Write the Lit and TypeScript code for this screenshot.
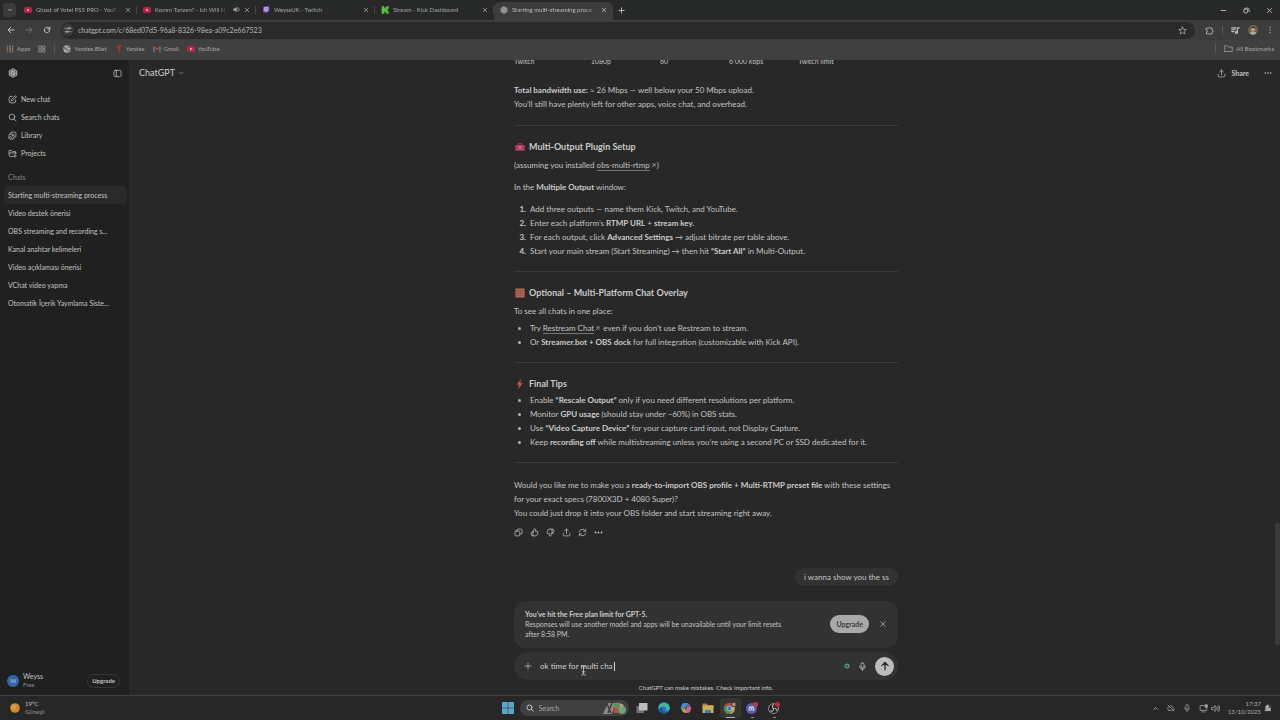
import { LitElement, html, css, svg, nothing } from "lit";
import { customElement } from "lit/decorators.js";
import { classMap } from "lit/directives/class-map.js";

const glyphs: Record<string, unknown> = {
  down: svg`<path d="M6 9l6 6 6-6"/>`,
  up: svg`<path d="M6 15l6-6 6 6"/>`,
  close: svg`<path d="M5 5l14 14M19 5L5 19"/>`,
  plus: svg`<path d="M12 3v18M3 12h18"/>`,
  back: svg`<path d="M21 12H4M11 4l-8 8 8 8"/>`,
  forward: svg`<path d="M3 12h17M13 4l8 8-8 8"/>`,
  reload: svg`<path d="M20 12a8 8 0 1 1-2.4-5.7L20 8.500M20.500 3v6h-6"/>`,
  tune: svg`<path d="M3 7h7M14 17h7M3 17h3M18 7h3"/><circle cx="15" cy="7" r="3"/><circle cx="9" cy="17" r="3"/>`,
  star: svg`<path d="M12 2.500l2.900 6.400 7 .700-5.300 4.600 1.600 6.900L12 17.500 5.800 21.100l1.600-6.900L2.100 9.600l7-.700z"/>`,
  puzzle: svg`<path d="M4 6h5.500a2.500 2.500 0 0 1 5 0H19v5a2.500 2.500 0 0 1 0 5v5H4v-5a2.500 2.500 0 0 0 0-5z"/>`,
  music: svg`<path d="M2 5h11M2 10h9M2 15h6M17 17V5h5"/><circle cx="14.500" cy="17.500" r="2.500"/>`,
  dots: svg`<g fill="currentColor" stroke="none"><circle cx="12" cy="4" r="2"/><circle cx="12" cy="12" r="2"/><circle cx="12" cy="20" r="2"/></g>`,
  more: svg`<g fill="currentColor" stroke="none"><circle cx="4" cy="12" r="2.400"/><circle cx="12" cy="12" r="2.400"/><circle cx="20" cy="12" r="2.400"/></g>`,
  min: svg`<path d="M4 12h16"/>`,
  restore: svg`<rect x="3" y="7" width="13" height="13" rx="3"/><path d="M8 4h8a5 5 0 0 1 5 5v7"/>`,
  folder: svg`<path d="M2 5h7l3 3h10v12H2z"/>`,
  grid: svg`<rect x="3" y="3" width="7" height="7"/><rect x="14" y="3" width="7" height="7"/><rect x="3" y="14" width="7" height="7"/><rect x="14" y="14" width="7" height="7"/>`,
  apps: svg`<g stroke-width="3"><path d="M4 3v18" stroke="#b06a5c" stroke-dasharray="4 3"/><path d="M12 3v18" stroke="#a8a8a8" stroke-dasharray="4 3"/><path d="M20 3v18" stroke="#a8906a" stroke-dasharray="4 3"/></g>`,
  globe: svg`<circle cx="12" cy="12" r="11" fill="#b4b4b4" stroke="none"/><path d="M4 8c4-1 5 2 8 3s0 5-3 4-2-4-5-5M14 3c-1 4 3 4 6 4M15 20c0-4 2-5 6-6" stroke="#404040" stroke-width="2.500"/>`,
  yandex: svg`<path d="M7 3l5 9M18 2c-5 0-6 5-6 10v10" stroke="#b5352b" stroke-width="3.500"/>`,
  gmail: svg`<g stroke-width="4.500"><path d="M3 20V6" stroke="#4a76c0"/><path d="M21 20V6" stroke="#3f8f56"/><path d="M3 6l9 7 9-7" stroke="#bb4338"/></g>`,
  youtube: svg`<rect x="0" y="3" width="24" height="18" rx="5" fill="#bd2143" stroke="none"/><path d="M9.500 8l7 4-7 4z" fill="#ddd" stroke="none"/>`,
  twitch: svg`<path d="M5 1h17v13l-5 5h-4l-4 4v-4H3V6z" fill="#7b4fc0" stroke="none"/><path d="M7 4h12v9l-3 3H7z" fill="#ccc4da" stroke="none"/><path d="M11.500 7v5M15.500 7v5" stroke="#7b4fc0"/>`,
  kick: svg`<path d="M2 1h8v6h3V4h3V1h7v8h-3v3h-2v1h2v3h3v7h-7v-3h-3v-3h-3v6H2z" fill="#58c23b" stroke="none"/>`,
  openai: svg`<g stroke-width="1.900">${[0, 60, 120, 180, 240, 300].map((a) => svg`<path d="M12 2a5 5 0 0 1 5 4.500v5.700L12 15M12 2a5 5 0 0 0-4.600 3.200" transform="rotate(${a} 12 12)"/>`)}</g>`,
  speaker: svg`<path d="M3 9h4l5-5v16l-5-5H3z" fill="currentColor"/><path d="M16 8a6 6 0 0 1 0 8M19 5a10 10 0 0 1 0 14"/>`,
  volume: svg`<path d="M2 9h4l5-5v16l-5-5H2zM14.500 9a5 5 0 0 1 0 6M18 6.500a9 9 0 0 1 0 11M21 4a13 13 0 0 1 0 16"/>`,
  panel: svg`<rect x="2.500" y="3.500" width="19" height="17" rx="4"/><path d="M9 4v16"/>`,
  compose: svg`<path d="M11 3.500H8a5 5 0 0 0-5 5V16a5 5 0 0 0 5 5h7.500a5 5 0 0 0 5-5v-3"/><path d="M9 15l1-4 8-8a2.200 2.200 0 0 1 3.200 3.200l-8 8z"/>`,
  search: svg`<circle cx="10.500" cy="10.500" r="7.500"/><path d="M16 16l5.500 5.500"/>`,
  library: svg`<rect x="2.500" y="8" width="13.500" height="13.500" rx="3.500"/><path d="M7 5a3.500 3.500 0 0 1 4-2.500l7.500 1a3.500 3.500 0 0 1 3 4l-1 7.500a3 3 0 0 1-2 2.500M3 18l4-3.500 5 6.500"/><circle cx="11.500" cy="12.500" r="1"/>`,
  projects: svg`<path d="M13 20H6.500A3.500 3.500 0 0 1 3 16.500V4h6l3 3h8.500v5M3 10.500h18M18.500 15v7M15 18.500h7"/>`,
  share: svg`<path d="M12 15V3M7 7.500L12 3l5 4.500M3 14v3.500A3.500 3.500 0 0 0 6.500 21h11a3.500 3.500 0 0 0 3.500-3.500V14"/>`,
  copy: svg`<rect x="2.500" y="8" width="13" height="13" rx="3"/><path d="M8 8V6a3 3 0 0 1 3-3h7.500a3 3 0 0 1 3 3v7a3 3 0 0 1-3 3H16"/>`,
  like: svg`<path d="M8 10l4-8c2.500 0 3.500 1.800 3 4l-.700 3h4.200a2.500 2.500 0 0 1 2.400 3.200l-1.700 6.300A3.500 3.500 0 0 1 16 21H8a5 5 0 0 1-5-5v-2a4 4 0 0 1 4-4zM8 10v11"/>`,
  dislike: svg`<path d="M16 14l-4 8c-2.500 0-3.500-1.800-3-4l.700-3H5.500a2.500 2.500 0 0 1-2.400-3.200l1.700-6.300A3.500 3.500 0 0 1 8 3h8a5 5 0 0 1 5 5v2a4 4 0 0 1-4 4zM16 14V3"/>`,
  retry: svg`<path d="M3.500 10.500A8.700 8.700 0 0 1 19.500 7.500M20.500 3v5.500H15M20.500 13.500A8.700 8.700 0 0 1 4.500 16.500M3.500 21v-5.500H9"/>`,
  mic: svg`<rect x="8" y="2" width="8" height="13" rx="4"/><path d="M4.500 11.500a7.500 7.500 0 0 0 15 0M12 19v4"/>`,
  send: svg`<path d="M12 21V4M4.500 11L12 3.500l7.500 7.500"/>`,
  out: svg`<path d="M5 19L19 5M8 5h11v11"/>`,
  toolbox: svg`<path d="M8 8V4h8v4" stroke="#b8406a"/><rect x="1" y="7" width="22" height="14" rx="2" fill="#b8406a" stroke="none"/><path d="M1 13h22" stroke="#8a2c55" stroke-width="1.500"/><rect x="9.500" y="11" width="5" height="4" fill="#d68aa0" stroke="none"/>`,
  brick: svg`<rect x="1" y="1" width="22" height="22" rx="1" fill="#bb6a58" stroke="none"/><path d="M1 6.500h22M1 12h22M1 17.500h22M8 1v5.500M17 1v5.500M4 6.500V12M13 6.500V12M8 12v5.500M17 12v5.500M4 17.500V23M13 17.500V23" stroke="#8d4a40" stroke-width="1.200"/>`,
  bolt: svg`<path d="M14 1L5 13h5l-2 10 10-13h-6z" fill="#d0703a" stroke="#a04c38" stroke-width="1"/>`,
  cloudOff: svg`<path d="M6 19h12a4 4 0 0 0 1-7.500A6.500 6.500 0 0 0 7 9a5 5 0 0 0-1 10zM3 3l18 18"/>`,
  screen: svg`<path d="M14 4H3v13h18v-5M8 21h8"/><rect x="17" y="2" width="5" height="7" fill="currentColor"/>`,
  bell: svg`<path d="M5 18V10a7 7 0 0 1 14 0v8l2 2H3z" fill="currentColor"/><path d="M14 5h5l-5 5h5" stroke="#282828"/>`,
  windows: svg`<g fill="#5aa7cc" stroke="none"><rect x="0" y="0" width="11.500" height="11.500"/><rect x="12.500" y="0" width="11.500" height="11.500"/><rect x="0" y="12.500" width="11.500" height="11.500"/><rect x="12.500" y="12.500" width="11.500" height="11.500"/></g>`,
  tasks: svg`<rect x="1" y="8" width="15" height="14" fill="#707070" stroke="none"/><rect x="6" y="2" width="17" height="15" fill="#bdbdbd" stroke="none"/>`,
  edge: svg`<circle cx="12" cy="12" r="11.500" fill="#2478b8" stroke="none"/><path d="M1 10a11.500 11.500 0 0 1 22.500 2c0 4-4 6-8 4 2-3 0-7-4.500-7S3 12 1 14z" fill="#44b9a0" stroke="none"/><path d="M9 12c-2 5 2 9 8 9-6 4-13 0-13-6 0-3 2-4 5-3z" fill="#1b5394" stroke="none"/>`,
  copilot: svg`<path d="M8 2h8l-4 13H5c-5 0-4-4-2-8 1.500-3 2-5 5-5z" fill="#3f8fc8" stroke="none"/><path d="M16 22H8l4-13h7c5 0 4 4 2 8-1.500 3-2 5-5 5z" fill="#cc6a78" stroke="none"/><path d="M3 14h9l-2 7H9c-4 0-4-2-4.500-4z" fill="#c9a13e" stroke="none"/><path d="M14 3h2c3 0 4 3 4.500 7H12z" fill="#7a57b8" stroke="none"/><path d="M12 9h2l-2 6h-2z" fill="#272727" stroke="none"/>`,
  explorer: svg`<path d="M1 3h8l3 3h11v5H1z" fill="#a9812c" stroke="none"/><rect x="1" y="7" width="22" height="15" rx="1" fill="#cfae4e" stroke="none"/><path d="M6 22v-6h12v6" fill="#3c7cb0" stroke="none"/>`,
  chrome: svg`<circle cx="11" cy="13" r="11" fill="#c8a237" stroke="none"/><path d="M11 13L1.500 7.500A11 11 0 0 1 20.500 7.500z" fill="#b84438" stroke="none"/><path d="M11 13L1.500 7.500A11 11 0 0 0 11 24l5.500-8z" fill="#3c9153" stroke="none"/><circle cx="11" cy="13" r="5" fill="#3f78c0" stroke="#ccc" stroke-width="1.500"/><circle cx="20" cy="5" r="4.500" fill="#a89880" stroke="#4a4038"/>`,
  discord: svg`<circle cx="11" cy="13" r="11" fill="#5259b8" stroke="none"/><path d="M5 16.500c0-4 1-6.500 2-7.500l2.500-1 .700 1h1.600l.700-1L15 9c1 1 2 3.500 2 7.500-1 1-2 1.500-3 1.500l-1-1.500H9L8 18c-1 0-2-.500-3-1.500z" fill="#ccc" stroke="none"/><circle cx="8.800" cy="13.500" r="1.300" fill="#5259b8" stroke="none"/><circle cx="13.200" cy="13.500" r="1.300" fill="#5259b8" stroke="none"/><circle cx="19" cy="5" r="5" fill="#b83c48" stroke="none"/>`,
  obs: svg`<circle cx="11" cy="13" r="10" fill="#222" stroke="#b0b0b0" stroke-width="1.500"/><path d="M11 5c-3 2-3 6 0 8M18 17c-1-4-5-5-7-4M5 18c3 1 7-1 6-5" stroke="#b0b0b0" stroke-width="2.200"/><circle cx="19" cy="5" r="5" fill="#c22a30" stroke="none"/>`,
  sun: svg`<circle cx="12" cy="12" r="11.500" fill="#d08a2c" stroke="none"/><circle cx="9" cy="9" r="6" fill="#dd9c3c" stroke="none"/>`,
  face: svg`<circle cx="12" cy="12" r="12" fill="#6e6350" stroke="none"/><circle cx="12" cy="10" r="5" fill="#c0997c" stroke="none"/><path d="M4 20c2-6 14-6 16 0a12 12 0 0 1-16 0z" fill="#b0aea4" stroke="none"/><path d="M6 10c0-8 12-8 12 0-2-3-9-4-12 0z" fill="#33291f" stroke="none"/>`,
  ring: svg`<circle cx="12" cy="12" r="7" stroke="#3f9f80" stroke-width="6"/>`,
  beam: svg`<path d="M8 2c3 0 4 1 4 3v14c0 2 1 3 4 3M16 2c-3 0-4 1-4 3M12 19c0 2-1 3-4 3M9 15h6" stroke-width="1.800"/>`,
};

const icon = (name: string, size = 8, weight = 2) => html`<svg
  viewBox="0 0 24 24" width=${size} height=${size} fill="none" stroke="currentColor"
  stroke-width=${weight} stroke-linecap="round" stroke-linejoin="round" aria-hidden="true">${glyphs[name]}</svg>`;

const base = css`
  :host { display: block; font-family: Lato, "Segoe UI", sans-serif; color: #c4c4c4; }
  * { box-sizing: border-box; }
  svg { display: block; flex: none; }
  button { font: inherit; color: inherit; background: none; border: 0; padding: 0; display: flex; align-items: center; justify-content: center; flex: none; }
  input { font: inherit; color: inherit; background: none; border: 0; padding: 0; outline: 0; min-width: 0; flex: 1; }
  a { color: inherit; text-decoration: none; }
`;

@customElement("browser-chrome")
class BrowserChrome extends LitElement {
  static styles = [base, css`
    .strip { display: flex; align-items: center; height: 20px; padding-left: 3px; background: #272928; font-size: 6px; }
    .drop { width: 13px; height: 14px; border-radius: 4px; background: #3a3b3a; margin-right: 2px; }
    .tab { display: flex; align-items: center; flex: 0 1 119px; min-width: 0; height: 18px; margin-top: 2px; padding: 0 6px 3px; gap: 4px; position: relative; color: #a6a6a6; }
    .tab:not(.active)::after { content: ""; position: absolute; right: 0; top: 4px; height: 8px; width: 1px; background: #434443; }
    .tab.active { background: #3d3d3d; border-radius: 6px 6px 0 0; color: #bdbdbd; }
    .title { flex: 1; white-space: nowrap; overflow: hidden; }
    .title.cut { mask-image: linear-gradient(90deg, #000 85%, transparent); }
    .new { width: 16px; height: 16px; }
    .window { margin-left: auto; display: flex; gap: 16px; padding-right: 7px; }
    .bar { display: flex; align-items: center; height: 20px; background: #3c3c3c; padding: 0 6px 0 7px; gap: 10px; }
    .off { color: #707070; }
    .url { flex: 1; display: flex; align-items: center; height: 17px; border-radius: 9px; background: #2a2a2a; padding: 0 8px 0 1px; gap: 4px; font-size: 7px; color: #b8b8b8; }
    .site { width: 12px; height: 12px; border-radius: 6px; background: #3a3a3a; }
    .tools { display: flex; align-items: center; gap: 8px; }
    .rule { width: 1px; height: 9px; background: #585858; }
    .marks { display: flex; align-items: center; height: 20px; background: #404040; padding: 0 6px 3px; gap: 8px; font-size: 6px; color: #a6a6a6; }
    .marks a { display: flex; align-items: center; gap: 3px; }
    .all { margin-left: auto; display: flex; align-items: center; gap: 8px; }
  `];
  tabs = [
    { mark: "youtube", title: "Ghost of Yotei PS5 PRO - YouT", cut: true },
    { mark: "youtube", title: "Komm Tanzen? - Ich Will N", cut: true, sound: true },
    { mark: "twitch", title: "WeyssUK - Twitch" },
    { mark: "kick", title: "Stream - Kick Dashboard" },
    { mark: "openai", title: "Starting multi-streaming proce", cut: true, active: true },
  ] as { mark: string; title: string; cut?: boolean; sound?: boolean; active?: boolean }[];
  render() {
    return html`
      <div class="strip">
        <button class="drop" aria-label="Search tabs">${icon("down", 6, 3)}</button>
        ${this.tabs.map((t) => html`<div class=${classMap({ tab: true, active: !!t.active })}>
          ${icon(t.mark, 8)}<span class=${classMap({ title: true, cut: !!t.cut })}>${t.title}</span>
          ${t.sound ? icon("speaker", 7) : nothing}
          <button aria-label="Close tab">${icon("close", 6, 3)}</button></div>`)}
        <button class="new" aria-label="New tab">${icon("plus", 7, 3)}</button>
        <div class="window">
          <button aria-label="Minimize">${icon("min", 7, 3)}</button>
          <button aria-label="Restore">${icon("restore", 7, 3)}</button>
          <button aria-label="Close">${icon("close", 7, 3)}</button>
        </div>
      </div>
      <div class="bar">
        <button aria-label="Back">${icon("back", 8, 3)}</button>
        <button class="off" aria-label="Forward">${icon("forward", 8, 3)}</button>
        <button aria-label="Reload">${icon("reload", 8, 3)}</button>
        <div class="url"><button class="site" aria-label="Site information">${icon("tune", 8)}</button>
          <input aria-label="Address" value="chatgpt.com/c/68ed07d5-96a8-8326-98ea-a09c2e667523">
          <button aria-label="Bookmark this tab">${icon("star", 9)}</button></div>
        <div class="tools">
          <button aria-label="Extensions">${icon("puzzle", 9, 2)}</button><span class="rule"></span>
          <button aria-label="Media">${icon("music", 9, 3)}</button>
          <button aria-label="Profile">${icon("face", 10)}</button>
          <button aria-label="Menu">${icon("dots", 8)}</button>
        </div>
      </div>
      <div class="marks">
        <a href="#">${icon("apps", 8)}Apps</a>
        <a href="#" aria-label="Tab groups">${icon("grid", 8)}</a>
        <span class="rule"></span>
        <a href="#">${icon("globe", 8)}Yandex.Bilet</a>
        <a href="#">${icon("yandex", 8)}Yandex</a>
        <a href="#">${icon("gmail", 8)}Gmail</a>
        <a href="#">${icon("youtube", 8)}YouTube</a>
        <div class="all"><span class="rule"></span><a href="#">${icon("folder", 9)}All Bookmarks</a></div>
      </div>`;
  }
}

@customElement("chat-sidebar")
class ChatSidebar extends LitElement {
  static styles = [base, css`
    :host { display: flex; flex-direction: column; background: #202020; border-right: 1px solid #2a2a2a; font-size: 7px; }
    .top { display: flex; justify-content: space-between; align-items: center; height: 26px; padding: 0 7px 0 8px; }
    nav { display: flex; flex-direction: column; padding: 4px 2px 0 4px; }
    nav a { height: 18px; line-height: 18px; padding: 0 4px; border-radius: 5px; white-space: nowrap; overflow: hidden; text-overflow: ellipsis; }
    nav a.tool { display: flex; align-items: center; gap: 4px; }
    nav a.active { background: #2a2a2a; }
    h2 { margin: 6px 0 0; padding: 0 4px; font-size: 7px; line-height: 18px; font-weight: 400; color: #858585; }
    .user { margin-top: auto; display: flex; align-items: center; gap: 4px; padding: 0 9px 6px 7px; }
    .avatar { width: 12px; height: 12px; border-radius: 6px; background: #2f68a8; font-size: 6px; display: grid; place-items: center; }
    .name { flex: 1; line-height: 9px; }
    .name small { display: block; font-size: 6px; line-height: 8px; color: #8c8c8c; }
    .up { height: 14px; padding: 0 4px; border: 1px solid #363636; border-radius: 7px; font-size: 6px; font-weight: 700; }
  `];
  chats = ["Starting multi-streaming process", "Video destek önerisi", "OBS streaming and recording s...", "Kanal anahtar kelimeleri", "Video açıklaması önerisi", "VChat video yapma", "Otomatik İçerik Yayınlama Siste..."];
  render() {
    return html`
      <div class="top"><a href="#" aria-label="Home">${icon("openai", 10)}</a>
        <button aria-label="Close sidebar">${icon("panel", 9)}</button></div>
      <nav>
        ${[["compose", "New chat"], ["search", "Search chats"], ["library", "Library"], ["projects", "Projects"]].map(
          ([i, t]) => html`<a class="tool" href="#">${icon(i, 9)}${t}</a>`)}
        <h2>Chats</h2>
        ${this.chats.map((c, i) => html`<a href="#" class=${classMap({ active: i === 0 })}>${c}</a>`)}
      </nav>
      <div class="user"><span class="avatar">W</span><div class="name">Weyss<small>Free</small></div>
        <button class="up">Upgrade</button></div>`;
  }
}

@customElement("chat-thread")
class ChatThread extends LitElement {
  static styles = [base, css`
    :host { display: flex; flex-direction: column; position: relative; background: #282828; min-height: 0; min-width: 0; padding-left: 2px; font-size: 8px; line-height: 14px; }
    header { position: absolute; top: 0; left: 0; right: 0; height: 26px; display: flex; align-items: center; justify-content: space-between; padding: 0 8px 0 9px; }
    .model { gap: 3px; font-size: 9px; color: #cfcfcf; }
    .acts { display: flex; gap: 15px; font-size: 7px; font-weight: 700; }
    .acts button { gap: 5px; }
    .log { flex: 1; min-height: 0; overflow: hidden; display: flex; flex-direction: column; justify-content: flex-end; }
    .column { width: 100%; max-width: 384px; margin: 0 auto; flex: none; }
    table { border-collapse: collapse; font-size: 7px; margin-bottom: 15px; table-layout: fixed; width: 100%; }
    td { padding: 0; height: 14px; line-height: 14px; width: 18%; }
    td:first-child { width: 20%; }
    td:last-child { width: 26%; }
    p { margin: 0 0 8px; }
    hr { border: 0; height: 1px; background: #3a3a3a; margin: 13px 0; }
    hr.first { margin-top: 14px; }
    hr.last { margin-bottom: 15px; }
    h3 { margin: 0 0 3px; font-size: 9px; line-height: 16px; font-weight: 700; display: flex; align-items: center; gap: 4px; padding-left: 1px; color: #cbcbcb; }
    h3.tight { margin-bottom: 1px; }
    p.lead { margin-bottom: 3px; }
    ol, ul { list-style: none; margin: 0; padding: 0; counter-reset: n; }
    li { display: grid; grid-template-columns: 12px 1fr; column-gap: 4px; counter-increment: n; }
    ol li::before { content: counter(n) "."; font-weight: 700; text-align: right; }
    ul li::before { content: ""; width: 3px; height: 3px; border-radius: 2px; background: #b4b4b4; margin: 6px 0 0 4px; }
    b { font-weight: 700; color: #cbcbcb; }
    a { border-bottom: 1px solid #777; }
    a + svg { display: inline-block; margin: 0 1px; }
    .react { display: flex; gap: 7px; margin-top: 8px; }
    .bubble { width: fit-content; margin: 31px 0 15px auto; padding: 2px 9px; border-radius: 9px; background: #323232; }
    .note { display: flex; align-items: center; background: #323232; border-radius: 12px; padding: 8px 11px 9px 11px; margin-bottom: 4px; font-size: 7px; line-height: 10px; }
    .note div { flex: 1; padding-right: 40px; }
    .note p { margin: 0; }
    .upgrade { height: 18px; padding: 0 6px; border-radius: 9px; background: #a9a9a9; color: #3a3a3a; margin-right: 10px; font-weight: 700; }
    .compose { position: relative; display: flex; align-items: center; gap: 8px; height: 28px; border-radius: 14px; background: #323232; padding: 0 4px 0 10px; color: #cfcfcf; }
    .send { width: 19px; height: 19px; border-radius: 10px; background: #bcbcbc; color: #262626; }
    .caret { position: absolute; left: 100px; top: 10px; width: 1px; height: 9px; background: #d6d6d6; }
    .pointer { position: absolute; left: 64px; top: 13px; }
    .legal { margin: 0; padding: 3px 0 2px; text-align: center; font-size: 6px; line-height: 10px; color: #d0d0d0; }
    .thumb { position: absolute; right: 0; bottom: 50px; width: 5px; height: 122px; border-radius: 2px; background: #3b3b39; }
  `];
  render() {
    const out = icon("out", 5, 3);
    return html`
      <div class="log"><div class="column">
        <table><tbody><tr><td>Twitch</td><td>1080p</td><td>60</td><td>6 000 kbps</td><td>Twitch limit</td></tr></tbody></table>
        <p><b>Total bandwidth use:</b> ≈ 26 Mbps — well below your 50 Mbps upload.<br>You’ll still have plenty left for other apps, voice chat, and overhead.</p>
        <hr class="first">
        <h3>${icon("toolbox", 10)}Multi-Output Plugin Setup</h3>
        <p>(assuming you installed <a href="#">obs-multi-rtmp</a>${out})</p>
        <p>In the <b>Multiple Output</b> window:</p>
        <ol>
          <li><span>Add three outputs — name them Kick, Twitch, and YouTube.</span></li>
          <li><span>Enter each platform’s <b>RTMP URL</b> + <b>stream key.</b></span></li>
          <li><span>For each output, click <b>Advanced Settings</b> → adjust bitrate per table above.</span></li>
          <li><span>Start your main stream (Start Streaming) → then hit <b>“Start All”</b> in Multi-Output.</span></li>
        </ol>
        <hr>
        <h3>${icon("brick", 10)}Optional – Multi-Platform Chat Overlay</h3>
        <p class="lead">To see all chats in one place:</p>
        <ul>
          <li><span>Try <a href="#">Restream Chat</a>${out} even if you don’t use Restream to stream.</span></li>
          <li><span>Or <b>Streamer.bot + OBS dock</b> for full integration (customizable with Kick API).</span></li>
        </ul>
        <hr>
        <h3 class="tight">${icon("bolt", 10)}Final Tips</h3>
        <ul>
          <li><span>Enable <b>“Rescale Output”</b> only if you need different resolutions per platform.</span></li>
          <li><span>Monitor <b>GPU usage</b> (should stay under ~60%) in OBS stats.</span></li>
          <li><span>Use <b>“Video Capture Device”</b> for your capture card input, not Display Capture.</span></li>
          <li><span>Keep <b>recording off</b> while multistreaming unless you’re using a second PC or SSD dedicated for it.</span></li>
        </ul>
        <hr class="last">
        <p>Would you like me to make you a <b>ready-to-import OBS profile + Multi-RTMP preset file</b> with these settings<br>for your exact specs (7800X3D + 4080 Super)?<br>You could just drop it into your OBS folder and start streaming right away.</p>
        <div class="react">${["copy", "like", "dislike", "share", "retry", "more"].map((n) => html`<button aria-label=${n}>${icon(n, 9)}</button>`)}</div>
        <div class="bubble">i wanna show you the ss</div>
      </div></div>
      <header><button class="model">ChatGPT ${icon("down", 6)}</button>
        <div class="acts"><button>${icon("share", 9)}Share</button><button aria-label="More">${icon("more", 8)}</button></div></header>
      <div class="column">
        <div class="note"><div><p><b>You’ve hit the Free plan limit for GPT-5.</b></p>
          <p>Responses will use another model and apps will be unavailable until your limit resets after 8:58 PM.</p></div>
          <button class="upgrade">Upgrade</button><button aria-label="Dismiss">${icon("close", 8)}</button></div>
        <div class="compose"><button aria-label="Add">${icon("plus", 8)}</button>
          <input aria-label="Message" value="ok time for multi cha"><span class="caret"></span>
          ${icon("ring", 6)}<button aria-label="Dictate">${icon("mic", 9)}</button>
          <button class="send" aria-label="Send">${icon("send", 10, 3)}</button>
          <span class="pointer">${icon("beam", 11)}</span></div>
        <p class="legal">ChatGPT can make mistakes. Check important info.</p>
      </div>
      <span class="thumb"></span>`;
  }
}

@customElement("task-bar")
class TaskBar extends LitElement {
  static styles = [base, css`
    :host { display: grid; grid-template-columns: 1fr auto 1fr; align-items: center; height: 24px; border-top: 1px solid #414141; background: #272727; font-size: 6px; line-height: 8px; }
    .weather { display: flex; align-items: center; gap: 5px; padding-left: 10px; }
    .weather small { display: block; font-size: 6px; color: #949494; }
    .mid { display: flex; align-items: center; gap: 1px; padding-left: 6px; }
    .search { display: flex; align-items: center; gap: 5px; width: 109px; height: 16px; border-radius: 8px; background: #404040; padding-left: 6px; overflow: hidden; font-size: 7px; margin: 0 2px 0 5px; }
    .art { width: 26px; height: 12px; margin-right: 1px; }
    .app { width: 21px; height: 20px; border-radius: 3px; position: relative; }
    .app.active { background: #353634; }
    .app.open::after { content: ""; position: absolute; bottom: 0; left: 9px; width: 3px; height: 1px; background: #8c8c8c; }
    .app.active::after { content: ""; position: absolute; bottom: 0; left: 6px; width: 9px; height: 1px; background: #b0b0b0; }
    .tray { display: flex; align-items: center; justify-content: flex-end; gap: 8px; padding-right: 8px; color: #adadad; }
    .pair { display: flex; align-items: center; gap: 3px; }
    .clock { text-align: right; }
    input::placeholder { color: #a6a6a6; opacity: 1; }
  `];
  render() {
    const apps: [string, string][] = [["tasks", ""], ["edge", ""], ["copilot", ""], ["explorer", ""], ["chrome", "active"], ["discord", "open"], ["obs", "open"]];
    return html`
      <div class="weather">${icon("sun", 10)}<div>19°C<small>Güneşli</small></div></div>
      <div class="mid">
        <button aria-label="Start">${icon("windows", 12)}</button>
        <div class="search">${icon("search", 8, 3)}<input aria-label="Search" placeholder="Search">
          <svg class="art" viewBox="0 0 26 12"><path d="M1 12L6 1h7l-3 11z" fill="#8f8a86"/><path d="M5 2l4 9M10 1L6 11" stroke="#3c3c3c" stroke-width="1.500"/><circle cx="15" cy="4" r="3.500" fill="#5d8f62"/><circle cx="20" cy="8" r="4" fill="#6aa27a"/><path d="M11 8l4-3 3 6h-6z" fill="#b5533f"/><path d="M17 1l5 2-3 3z" fill="#bba678"/></svg></div>
        ${apps.map(([n, s]) => html`<button class="app ${s}" aria-label=${n}>${icon(n, 12)}</button>`)}
      </div>
      <div class="tray">${icon("up", 7, 3)}${icon("cloudOff", 8)}${icon("mic", 8)}
        <span class="pair">${icon("screen", 9)}${icon("volume", 9)}</span>
        <span class="pair"><span class="clock">17:37<br>13/10/2025</span>${icon("bell", 8)}</span></div>`;
  }
}

@customElement("app-root")
class AppRoot extends LitElement {
  static styles = css`
    :host { display: flex; flex-direction: column; height: 100vh; overflow: hidden; background: #282828; }
    .body { flex: 1; min-height: 0; display: grid; grid-template-columns: 130px 1fr; }
  `;
  render() {
    return html`<browser-chrome></browser-chrome>
      <div class="body"><chat-sidebar></chat-sidebar><chat-thread></chat-thread></div>
      <task-bar></task-bar>`;
  }
}
